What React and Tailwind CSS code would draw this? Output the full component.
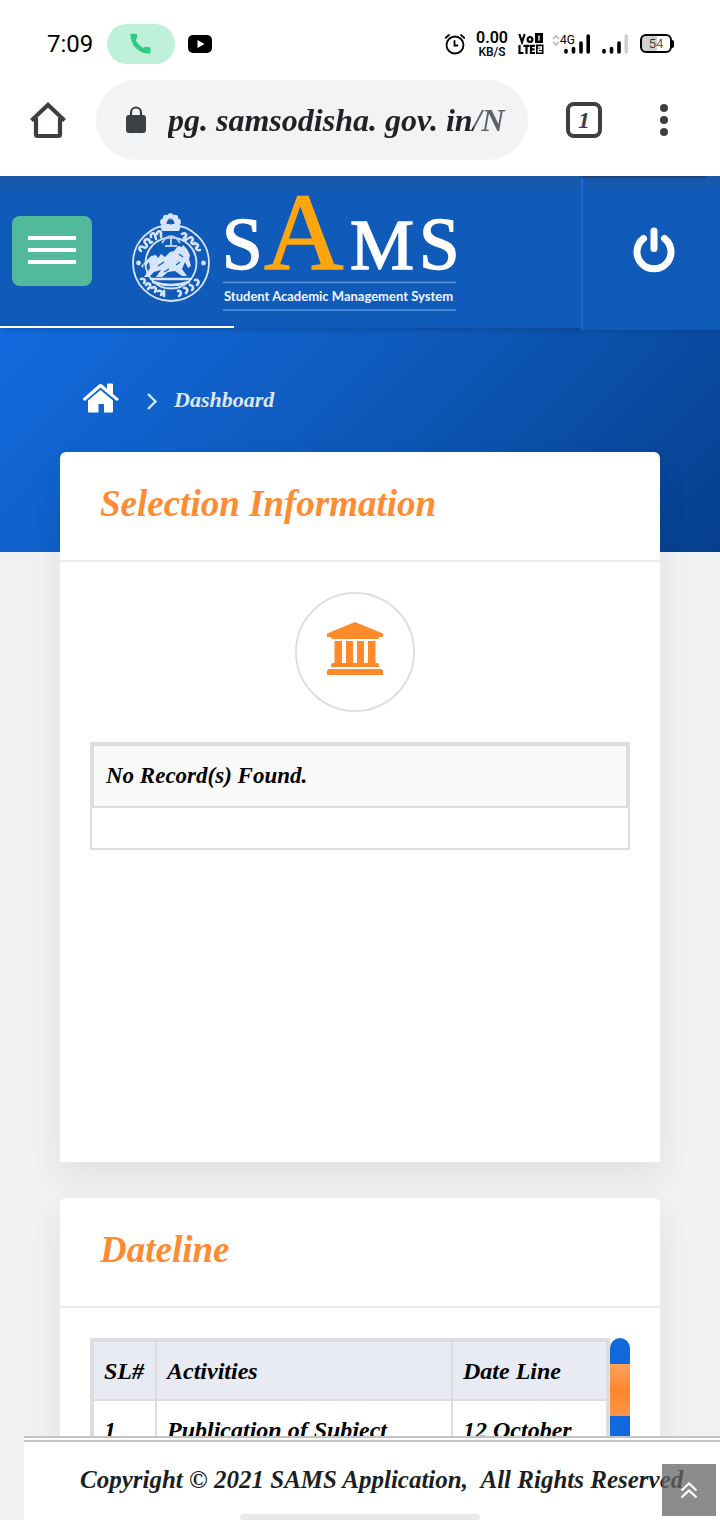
import React, { useState } from 'react'

const datelines = [
  { id: 1, activity: 'Publication of Subject', date: '12 October' },
]

const SignalBars = ({ faded }) => (
  <svg width="26" height="20" viewBox="0 0 26 20">
    <g strokeWidth="3.600" strokeLinecap="round" stroke="#000">
      <path d="M2 16.500v1.500M9.500 14.500v3.500M17 9v9" />
      <path d="M24.200 2v16" stroke={faded ? '#d0d0d0' : '#000'} />
    </g>
  </svg>
)

const StatusBar = () => (
  <div className="flex h-20 items-center justify-between pb-px pl-[47px] pr-12 pt-2 font-[Roboto,sans-serif] text-black">
    <div className="flex items-center">
      <span className="w-[60px] text-2xl">7:09</span>
      <span className="flex h-10 w-[68px] items-center justify-center rounded-full bg-[#bff0d9]">
        <svg width="22" height="22" viewBox="0 0 22 22" fill="#2dcb83">
          <path d="M1.500.8h4.300c.7 0 1.200.5 1.200 1.200.1 1.300.1 2.500-.3 3.600-.2.700-.7 1-.9 1.500 1.700 3.400 4.100 6 7.700 8 .6-.5.9-.9 1.500-1 1.200-.2 2.800-.1 4.300.1.800.1 1.200.5 1.200 1.200v4.200c0 .7-.5 1.100-1.200 1.100C9 20.700.6 12.400.4 2 .4 1.300.8.8 1.500.8Z" />
        </svg>
      </span>
      <svg className="ml-[13px]" width="24" height="18" viewBox="0 0 24 18">
        <rect width="24" height="18" rx="5" fill="#000" />
        <path d="m9.500 5 7 4-7 4z" fill="#fff" />
      </svg>
    </div>

    <div className="flex items-center">
      <svg width="22" height="22" viewBox="0 0 22 22" fill="none" stroke="#000" strokeWidth="1.800" strokeLinecap="round">
        <circle cx="11" cy="12" r="8.500" />
        <path d="M10.500 8v4.500h3M1.800 4.800 5 2M20.200 4.800 17 2" />
      </svg>
      <div className="ml-2.5 flex w-8 flex-col items-center">
        <span className="text-base font-semibold leading-4">0.00</span>
        <span className="text-xs font-medium leading-3">KB/S</span>
      </div>
      <svg className="ml-2.5" width="26" height="22" viewBox="0 0 26 22">
        <g fill="none" stroke="#000" strokeWidth="2.200">
          <path d="m1.300 1 2.700 8 2.700-8M1.500 12v8h4M5.500 12.800h6M8.500 12.500V21M17 12.800h-4v7.200h4M13 16.300h3.500" />
          <circle cx="12" cy="6.500" r="2.400" />
        </g>
        <path d="M17 0h8v10h-8zM18 11.500h7.500V21H18z" />
        <path d="M21 2.500v5M19.800 14h3.500v2.300h-3v2.500h3.500" fill="none" stroke="#fff" strokeWidth="1.400" />
      </svg>
      <div className="relative ml-5">
        <SignalBars />
        <svg className="absolute -left-3 top-0" width="8" height="14" viewBox="0 0 8 14" fill="none" stroke="#c4c4c4" strokeWidth="2">
          <path d="m1 5 3-3 3 3M1 8l3 3 3-3" />
        </svg>
        <span className="absolute -left-1 top-0 bg-white text-xs leading-3">4G</span>
      </div>
      <span className="ml-3"><SignalBars faded /></span>
      <div className="relative ml-3 flex h-[19px] w-8 items-center justify-center rounded-md border-2 border-black bg-linear-to-r from-[#d0d0d0] from-54% to-white to-54% text-[13px] font-light">
        54
        <span className="absolute -right-1 h-2 w-0.5 rounded-r bg-black"></span>
      </div>
    </div>
  </div>
)

const BrowserBar = () => {
  const [url, setUrl] = useState('pg. samsodisha. gov. in/N')

  return (
    <div className="flex h-24 items-start pl-7 pr-[46px]">
      <button aria-label="Home" className="mt-5 h-10 w-10">
        <svg width="40" height="40" viewBox="0 0 40 40" fill="none" stroke="#3c4043" strokeWidth="4.200">
          <path d="M3.500 20.500 20 4.800l16.500 15.700" />
          <path d="M8 18v16.500c0 1 .5 1.500 1.500 1.500h21c1 0 1.500-.5 1.500-1.500V18" />
        </svg>
      </button>
      <div className="ml-7 flex h-20 min-w-0 flex-1 items-center rounded-full bg-[#f1f3f4] pl-[30px] pr-4">
        <svg className="shrink-0" width="20" height="28" viewBox="0 0 20 28">
          <rect y="9" width="20" height="18" rx="3" fill="#3c4043" />
          <path d="M5 10V6.500a5 5 0 0 1 10 0V10" fill="none" stroke="#3c4043" strokeWidth="2.200" />
        </svg>
        <input
          aria-label="Address"
          value={url}
          onChange={(e) => setUrl(e.target.value)}
          className="ml-[22px] min-w-0 flex-1 bg-linear-to-r from-[#202124] from-89% to-[#5f6368] to-89% bg-clip-text text-[32px] font-bold italic text-transparent outline-none"
        />
      </div>
      <button aria-label="Tabs" className="ml-[38px] mt-[22px] flex h-9 w-9 items-center justify-center rounded-lg border-4 border-[#3c4043] text-2xl font-bold italic text-[#3c4043]">
        1
      </button>
      <button aria-label="More" className="ml-[52px] mt-6 flex h-8 w-5 flex-col items-center justify-between">
        <span className="h-2 w-2 rounded-full bg-[#3c4043]"></span>
        <span className="h-2 w-2 rounded-full bg-[#3c4043]"></span>
        <span className="h-2 w-2 rounded-full bg-[#3c4043]"></span>
      </button>
    </div>
  )
}

const Logo = () => (
  <svg className="overflow-visible" width="330" height="120" viewBox="130 193 330 120" role="img" aria-label="SAMS">
    {/* EMBLEM */}
    <g fill="none" stroke="#d7e5fa" strokeLinecap="round">
      <circle cx="171" cy="263" r="38" strokeWidth="1.800" />
      <circle cx="171" cy="263" r="25.500" strokeWidth="1.800" />
      <g strokeWidth="2.600">
        <path d="M141 251c-3-2-1-6 2-4s5-1 3-3M145 243c-2-3 2-5 4-3s0 4 3 2M151 237c-1-4 3-5 4-2l1 4M157 234c0-3 4-4 4-1v4M182 234c3-2 6 1 3 3s0 4 2 2M189 238c3-2 5 1 3 3s1 4 3 2M195 244c3-1 4 2 2 3s0 4 3 3" />
        <path d="M141 279c3-1 5 1 3 4M146 285c2-3 5-1 4 2l-2 2M152 288c3-2 5 0 3 4M158 291c3-1 5 1 3 4M164 291v5M178 291c3-1 4 3 1 5M184 288c2-1 5 2 2 5M190 285c3 0 4 3 2 5M195 280c3-1 5 2 2 5" />
      </g>
      <path d="M151 279h40M153 282c12 4 24 4 36 0" strokeWidth="2.400" />
    </g>
    <g fill="#d7e5fa">
      <circle cx="138.500" cy="263" r="2.400" />
      <circle cx="203.500" cy="263" r="2.400" />
      <circle cx="163.500" cy="222" r="3.400" />
      <circle cx="177.500" cy="222" r="3.400" />
      <circle cx="166" cy="218" r="3.200" />
      <circle cx="175" cy="218" r="3.200" />
      <circle cx="170.500" cy="216.500" r="3.200" />
      <path d="M160 226c6-3 15-3 21 0l-2 5h-17z" />
      <path d="m151 256 5-1 2 3 3-4 4 3 5-5 4-1 4-5 4 1 1-2 4 4 3 6-1 4 2 7-3 2-3-6-3 7 5 7h-5l-7-5-7 1-6 5h-6l5-7-7 2-5 5h-5l6-9-1-6-4 5-1-4-1 5-2-2z" />
    </g>
    <path d="m158 266 6-4M164 272l5-3M179 254l4 3M176 265l4-3" stroke="#105aba" strokeWidth="1.200" />
    <path d="M162 243c5-9 13-9 18 0M165 246h12M171 238v7" fill="none" stroke="#b4cdf0" strokeWidth="2" />
    <circle cx="170.500" cy="221.500" r="2.600" fill="none" stroke="#105aba" strokeWidth="1" />

    {/* WORDMARK */}
    <g fontFamily="'Liberation Serif', serif" fill="#fff" stroke="#fff" strokeWidth="1.500">
      <text x="222" y="269" fontSize="73">S</text>
      <text x="264" y="269" fontSize="110" fill="#ffa60f" stroke="#ffa60f">A</text>
      <text x="350" y="269" fontSize="72">M</text>
      <text x="419" y="269" fontSize="73">S</text>
    </g>
    <path d="M223 282.500h233M223 310h233" stroke="#5f93dc" strokeWidth="1.500" />
    <text x="224" y="301" fontFamily="Lato, sans-serif" fontSize="13" fontWeight="bold" fill="#f0f6ff">
      Student Academic Management System
    </text>
  </svg>
)

const Header = () => (
  <header className="relative z-10 flex h-[152px] shrink-0 bg-linear-to-b from-[#1a58a8] to-[#105aba] to-12% shadow-md">
    <div className="flex min-w-0 flex-1 items-center pb-0.5 pl-3">
      <button aria-label="Menu" className="flex h-[70px] w-20 shrink-0 flex-col items-center justify-center gap-2 rounded-lg bg-[#53b99b] pb-0.5">
        <span className="h-1 w-12 bg-white"></span>
        <span className="h-1 w-12 bg-white"></span>
        <span className="h-1 w-12 bg-white"></span>
      </button>
      <a href="#home" className="ml-[38px] pt-1"><Logo /></a>
    </div>
    <button aria-label="Log out" className="-mb-0.5 flex w-[139px] items-center justify-center border-l-2 border-[#186bdc] bg-linear-to-b from-[#1a58a8] to-[#105aba] to-12% pb-1.5 pl-1">
      <svg width="44" height="46" viewBox="0 0 44 46" fill="none" stroke="#fff" strokeWidth="7" strokeLinecap="round">
        <path d="M22 4v17.500M11.500 11.500a17 17 0 1 0 21 0" />
      </svg>
    </button>
    <span className="absolute right-3.5 top-0 h-0.5 w-[125px] bg-[#1d4580]"></span>
    <span className="absolute bottom-0 left-0 h-0.5 w-[234px] bg-white"></span>
  </header>
)

const Card = ({ title, className, children }) => (
  <section className={`rounded-t-md bg-white shadow-[0_14px_32px_rgba(0,0,0,0.07)] ${className}`}>
    <h2 className="flex h-[110px] items-center border-b-2 border-[#ebecec] px-10 pb-1 text-[37px] font-bold italic text-[#ff8b33]">
      {title}
    </h2>
    <div className="p-[30px]">{children}</div>
  </section>
)

const App = () => {
  return (
    <div className="flex h-screen flex-col bg-[#f0f1f3] font-['Liberation_Serif',serif] text-black">
      <div className="shrink-0 bg-white">
        <StatusBar />
        <BrowserBar />
      </div>
      <Header />

      <main className="min-h-0 flex-1 overflow-y-auto [scrollbar-width:none]">
        <div className="h-56 bg-linear-135 from-[#126bdf] via-[#0e58b8] to-[#063f8d] pl-[82px] pt-[50px]">
          <nav className="flex items-center text-[22px] font-bold italic leading-9 text-[#dce7f7]">
            <a href="#home" aria-label="Home">
              <svg width="38" height="32" viewBox="0 0 38 32" fill="#fff">
                <path d="M6 18.500 18.500 8 31 18.500V29c0 1-.5 1.500-1.500 1.500H22V22h-5.500v8.500H7.500c-1 0-1.500-.5-1.500-1.500z" />
                <path d="m1 16.500 16-14q1.500-1 3 0l5 4.300V2.500q0-1 1-1h4q1 0 1 1V12l5.500 4.500q.5 1-.2 1.600-1 1-2.100.4L18.500 5.500 3.500 18.500q-1.200.5-2-.4-.9-.8-.5-1.600Z" />
              </svg>
            </a>
            <svg className="ml-6 mt-1.5" width="16" height="18" viewBox="0 0 16 18" fill="none" stroke="#dce7f7" strokeWidth="2.400">
              <path d="m4 2 7.500 7.500L4 17" />
            </svg>
            <span className="ml-3.5 pt-1">Dashboard</span>
          </nav>
        </div>

        <div className="-mt-[100px] flex flex-col gap-9 px-[60px]">
          <Card title="Selection Information" className="min-h-[710px]">
            <div className="flex justify-center pr-2.5">
              <div className="flex h-[120px] w-[120px] items-center justify-center rounded-full border-2 border-[#dfdfdf] pb-1.5">
                <svg width="56" height="54" viewBox="0 0 56 54" fill="#ff8a2c">
                  <path d="M28 0 56 11.500V15h-4q0 2-1.500 2h-45Q4 17 4 15H0v-3.500zM7.500 19H15v22h4V19h7v22h4V19h7v22h4V19h7.500v22h1.500q2 0 2 2v2H4v-2q0-2 2-2h1.500zM2.500 47h51q2.500 0 2.500 3v3H0v-3q0-3 2.500-3Z" />
                </svg>
              </div>
            </div>
            <div className="mt-[30px] border-2 border-[#ddd] pb-10">
              <table className="w-full border-collapse">
                <tbody>
                  <tr>
                    <td className="h-[62px] border-2 border-[#ddd] bg-[#f9f9f9] px-3 text-[23px] font-bold italic">
                      No Record(s) Found.
                    </td>
                  </tr>
                </tbody>
              </table>
            </div>
          </Card>

          <Card title="Dateline" className="">
            <div className="flex">
              <div className="flex-1 border-2 border-[#ddd]">
                <table className="w-full table-fixed border-collapse text-left text-2xl font-bold italic">
                  <thead>
                    <tr className="h-[59px] bg-[#e8ebf4]">
                      <th className="w-[63px] border-2 border-[#ddd] pl-2.5">SL#</th>
                      <th className="border-2 border-[#ddd] px-2.5">Activities</th>
                      <th className="w-[155px] border-2 border-[#ddd] px-2.5">Date Line</th>
                    </tr>
                  </thead>
                  <tbody>
                    {datelines.map((row) => (
                      <tr key={row.id} className="h-[59px]">
                        <td className="border-2 border-[#ddd] px-2.5">{row.id}</td>
                        <td className="border-2 border-[#ddd] px-2.5">{row.activity}</td>
                        <td className="border-2 border-[#ddd] px-2.5">{row.date}</td>
                      </tr>
                    ))}
                  </tbody>
                </table>
              </div>
              <div className="w-5 rounded-full bg-[#1269db] pt-[26px]">
                <div className="h-[52px] bg-linear-to-b from-[#ffa25c] via-[#ff872b] to-[#ff9545]"></div>
              </div>
            </div>
          </Card>
        </div>
      </main>

      <footer className="relative z-10 ml-6 h-[84px] shrink-0 border-t-[6px] border-double border-[#c3c3c3] bg-white pl-14 pt-[22px]">
        <p className="whitespace-nowrap text-[25px] font-bold italic leading-8 text-[#1c1f22]">
          Copyright © 2021 SAMS Application, &nbsp;All Rights Reserved
        </p>
        <button aria-label="Back to top" className="absolute bottom-1 right-1 flex h-[52px] w-[54px] items-center justify-center bg-[#666]/75">
          <svg width="18" height="18" viewBox="0 0 18 18" fill="none" stroke="#fff" strokeWidth="2.200">
            <path d="m1.500 9.500 7.500-7 7.500 7M1.500 16.500l7.500-7 7.500 7" />
          </svg>
        </button>
      </footer>
      <span className="fixed bottom-0 left-1/2 z-20 h-1.5 w-60 -translate-x-1/2 rounded-full bg-[#e8e8e8]"></span>
    </div>
  )
}

export default App
